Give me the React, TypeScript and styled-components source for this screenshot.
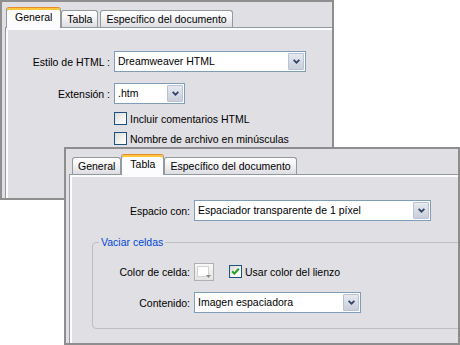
import styled, { createGlobalStyle } from "styled-components";

const GlobalStyle = createGlobalStyle`
  html, body {
    margin: 0;
    padding: 0;
    background: #fff;
  }
  body {
    font-family: "Liberation Sans", Arial, sans-serif;
    font-size: 10.5px;
    color: #000;
  }
`;

interface TabsProps {
  tabs: string[];
  active: string;
}

interface SelectProps {
  value: string;
  width: number;
}

const Chevron = () => (
  <svg width="7" height="5" viewBox="0 0 7 5">
    <path d="M0.6 0.8 L3.5 3.7 L6.4 0.8" fill="none" stroke="#34446a" strokeWidth="1.8" />
  </svg>
);

const Tabs = ({ tabs, active }: TabsProps) => (
  <TabStrip>
    {tabs.map((t) => (
      <Tab key={t} $active={t === active}>
        {t}
      </Tab>
    ))}
  </TabStrip>
);

const Select = ({ value, width }: SelectProps) => (
  <SelectBox $width={width}>
    <SelectValue>{value}</SelectValue>
    <ArrowButton>
      <Chevron />
    </ArrowButton>
  </SelectBox>
);

const Checkbox = ({ checked }: { checked?: boolean }) => (
  <CheckBox>
    {checked && (
      <svg width="11" height="11" viewBox="0 0 11 11">
        <path d="M2.2 5.2 L4.4 7.6 L8.8 2.8" fill="none" stroke="#21a121" strokeWidth="2" />
      </svg>
    )}
  </CheckBox>
);

const ColorSwatch = () => (
  <Swatch>
    <SwatchFill />
    <svg width="5" height="3" viewBox="0 0 5 3">
      <path d="M0 0 H5 L2.5 3 Z" fill="#8a8a8a" />
    </svg>
  </Swatch>
);

const TABS = ["General", "Tabla", "Específico del documento"];

const App = () => {
  return (
    <>
      <GlobalStyle />
      <Desktop>
        <Window $x={0} $y={0} $w={334} $h={200}>
          <Tabs tabs={TABS} active="General" />
          <Panel $padTop={23}>
            <Row>
              <Label $w={104}>Estilo de HTML :</Label>
              <Select value="Dreamweaver HTML" width={192} />
            </Row>
            <Row $mt={11}>
              <Label $w={104}>Extensión :</Label>
              <Select value=".htm" width={71} />
            </Row>
            <CheckRow $mt={7} $indent={108}>
              <Checkbox />
              Incluir comentarios HTML
            </CheckRow>
            <CheckRow $mt={5} $indent={108}>
              <Checkbox />
              Nombre de archivo en minúsculas
            </CheckRow>
          </Panel>
        </Window>

        <Window $x={64} $y={147} $w={396} $h={198}>
          <Tabs tabs={TABS} active="Tabla" />
          <Panel $padTop={25}>
            <Row>
              <Label $w={120}>Espacio con:</Label>
              <Select value="Espaciador transparente de 1 píxel" width={237} />
            </Row>
            <GroupBox>
              <Legend>Vaciar celdas</Legend>
              <Row $mt={12}>
                <Label $w={97}>Color de celda:</Label>
                <ColorSwatch />
                <CheckRow $ml={11}>
                  <Checkbox checked />
                  Usar color del lienzo
                </CheckRow>
              </Row>
              <Row $mt={10}>
                <Label $w={97}>Contenido:</Label>
                <Select value="Imagen espaciadora" width={167} />
              </Row>
            </GroupBox>
          </Panel>
        </Window>
      </Desktop>
    </>
  );
};

export default App;

const Desktop = styled.div`
  position: relative;
  width: 460px;
  height: 345px;
  overflow: hidden;
  background: #fff;
`;

const Window = styled.section<{ $x: number; $y: number; $w: number; $h: number }>`
  position: absolute;
  left: ${({ $x }) => $x}px;
  top: ${({ $y }) => $y}px;
  width: ${({ $w }) => $w}px;
  height: ${({ $h }) => $h}px;
  box-sizing: border-box;
  border: 2px solid #8e8e8e;
  background: #e0dfe3;
  display: flex;
  flex-direction: column;
  overflow: hidden;
`;

const TabStrip = styled.div`
  display: flex;
  align-items: flex-end;
  padding: 5px 0 0 6px;
  height: 20px;
`;

const Tab = styled.div<{ $active?: boolean }>`
  box-sizing: border-box;
  display: flex;
  align-items: center;
  white-space: nowrap;
  height: ${({ $active }) => ($active ? 21 : 17)}px;
  padding: ${({ $active }) => ($active ? "0 8px 2px" : "0 5px 1px")};
  margin: ${({ $active }) => ($active ? "0 0 -1px -2px" : "0 2px 0 0")};
  border: 1px solid #919b9c;
  border-bottom: none;
  border-radius: 3px 3px 0 0;
  position: relative;
  z-index: ${({ $active }) => ($active ? 1 : 0)};
  background: ${({ $active }) =>
    $active ? "#fcfcfe" : "linear-gradient(#ffffff, #f3f3f5 45%, #dcdce2)"};
  ${({ $active }) =>
    $active &&
    `
    border-top-color: #e68b2c;
    box-shadow: inset 0 2px 0 #ffc73c;
  `}
`;

const Panel = styled.div<{ $padTop: number }>`
  flex: 1;
  margin-left: 3px;
  padding-top: ${({ $padTop }) => $padTop}px;
  border-top: 1px solid #919b9c;
  border-left: 1px solid #919b9c;
  box-shadow: inset 2px 2px 0 #fcfcfe;
  background: #e0dfe3;
`;

const Row = styled.div<{ $mt?: number }>`
  display: flex;
  align-items: center;
  gap: 4px;
  height: 21px;
  margin-top: ${({ $mt }) => $mt ?? 0}px;
`;

const CheckRow = styled.div<{ $mt?: number; $indent?: number; $ml?: number }>`
  display: flex;
  align-items: center;
  gap: 3px;
  height: 15px;
  white-space: nowrap;
  margin-top: ${({ $mt }) => $mt ?? 0}px;
  margin-left: ${({ $ml }) => $ml ?? 0}px;
  padding-left: ${({ $indent }) => $indent ?? 0}px;
`;

const Label = styled.span<{ $w: number }>`
  width: ${({ $w }) => $w}px;
  flex-shrink: 0;
  text-align: right;
  white-space: nowrap;
`;

const SelectBox = styled.div<{ $width: number }>`
  box-sizing: border-box;
  display: flex;
  width: ${({ $width }) => $width}px;
  height: 21px;
  border: 1px solid #7f9db9;
  background: #fff;
  flex-shrink: 0;
`;

const SelectValue = styled.span`
  flex: 1;
  padding-left: 3px;
  line-height: 19px;
  white-space: nowrap;
  overflow: hidden;
`;

const ArrowButton = styled.span`
  box-sizing: border-box;
  width: 16px;
  margin: 1px;
  display: flex;
  align-items: center;
  justify-content: center;
  border: 1px solid #b9c2d6;
  border-radius: 1px;
  background: linear-gradient(#e6e9f0, #c9ceda);
`;

const CheckBox = styled.span`
  box-sizing: border-box;
  width: 13px;
  height: 13px;
  flex-shrink: 0;
  display: flex;
  align-items: center;
  justify-content: center;
  border: 1px solid #1c5180;
  background: linear-gradient(135deg, #dcdcd7, #fbfbf9 80%);
`;

const Swatch = styled.span`
  box-sizing: border-box;
  position: relative;
  width: 20px;
  height: 18px;
  flex-shrink: 0;
  border: 1px solid #b0b0b0;
  background: linear-gradient(#f8f8f8, #e4e4e4);
  padding: 2px;

  svg {
    position: absolute;
    right: 2px;
    bottom: 2px;
  }
`;

const SwatchFill = styled.span`
  display: block;
  box-sizing: border-box;
  width: 12px;
  height: 11px;
  border: 1px solid #d2d2d2;
  background: #fff;
`;

const GroupBox = styled.fieldset`
  box-sizing: border-box;
  width: 400px;
  margin: 15px 0 0 22px;
  padding: 0 0 15px 0;
  border: 1px solid #bdbdc2;
  border-radius: 4px;
`;

const Legend = styled.legend`
  margin-left: 6px;
  padding: 0 2px;
  line-height: 13px;
  color: #0046d5;
`;
